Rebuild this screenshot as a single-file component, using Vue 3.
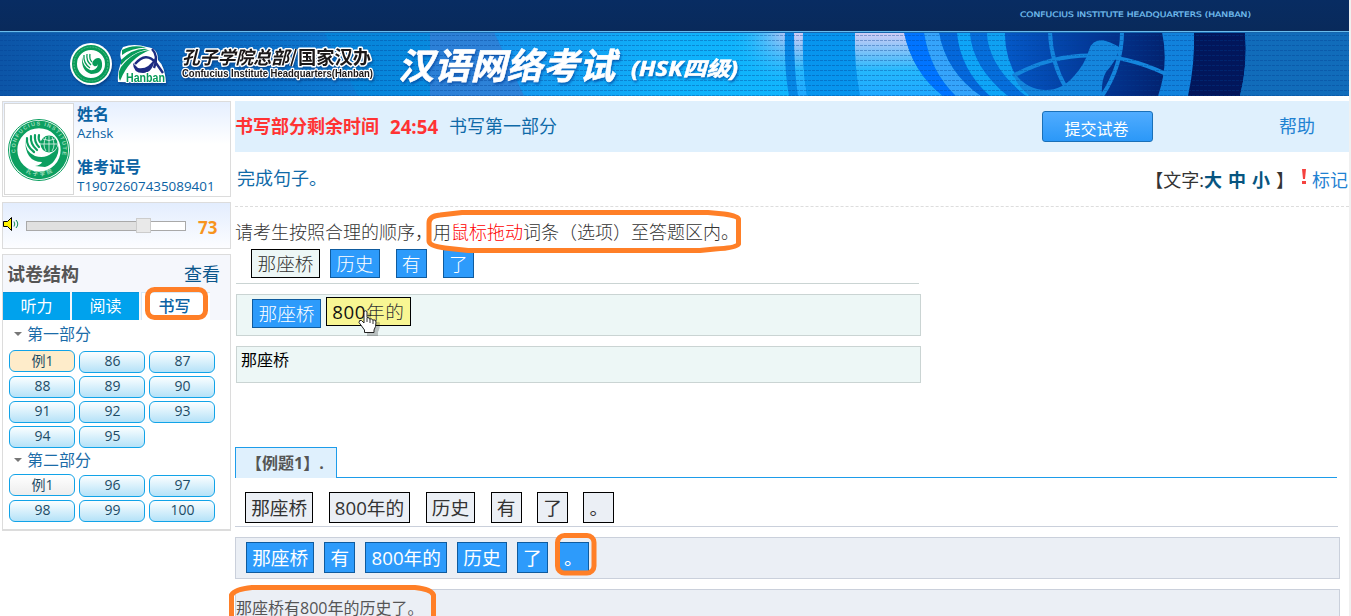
<template>

    <div class="page">

        <header class="banner">
            <svg class="art" width="1349" height="96" viewBox="0 0 1349 96">
                <defs>
                    <linearGradient id="top" x2="0" y2="1">
                        <stop offset="0" stop-color="#082c62" />
                        <stop offset="1" stop-color="#092a5b" />
                    </linearGradient>
                    <linearGradient id="sky" gradientUnits="userSpaceOnUse" x1="0" y1="0" x2="900" y2="0">
                        <stop offset="0" stop-color="#0c55a7" />
                        <stop offset=".3" stop-color="#0b70c8" />
                        <stop offset=".55" stop-color="#1594ec" />
                        <stop offset=".75" stop-color="#0fb2fb" />
                        <stop offset="1" stop-color="#12b8ff" />
                    </linearGradient>
                    <linearGradient id="shine" x2="0" y2="1">
                        <stop offset="0" stop-color="#d5cdf5" />
                        <stop offset=".6" stop-color="#25b8fd" />
                        <stop offset="1" stop-color="#1fa8ff" />
                    </linearGradient>
                    <radialGradient id="glow" gradientUnits="userSpaceOnUse" cx="790" cy="28" r="62">
                        <stop offset="0" stop-color="#d9c8f4" />
                        <stop offset="1" stop-color="#13bbff" stop-opacity="0" />
                    </radialGradient>
                    <linearGradient id="globe">
                        <stop offset="0" stop-color="#0459c8" />
                        <stop offset=".5" stop-color="#033b9c" />
                        <stop offset="1" stop-color="#03226f" />
                    </linearGradient>
                    <pattern id="dash" width="4" height="5" patternUnits="userSpaceOnUse">
                        <rect width="3" height="1" fill="#003c91" fill-opacity=".36" />
                    </pattern>
                </defs>
                <rect width="1349" height="31" fill="url(#top)" />
                <rect y="31" width="1349" height="1" fill="#6bbcec" />
                <rect y="32" width="1349" height="64" fill="url(#sky)" />
                <path d="M324 32H494L524 96H358Z" fill="#008bdc" opacity=".55" />
                <path d="M430 32H494L524 96H430Z" fill="#4a78cf" opacity=".55" />
                <rect x="720" y="32" width="70" height="64" fill="url(#glow)" />
                <path d="M785 32Q784 70 789 96H1349V32Z" fill="#0687e5" />
                <path d="M794 32Q794 70 798 96H807Q802 65 803 32Z" fill="url(#shine)" />
                <path d="M803 32Q802 65 807 96H860Q854 65 855 32Z" fill="#0795ee" />
                <path d="M855 32Q854 65 860 96H943Q912 72 904 32Z" fill="url(#shine)" />
                <path d="M904 32Q912 72 943 96H956Q930 71 924 32Z" fill="#0074ff" />
                <path d="M924 32Q930 71 956 96H981Q946 72 939 32Z" fill="#35a4fb" />
                <path d="M939 32Q946 72 981 96H990Q960 69 957 32Z" fill="#0468db" />
                <path d="M957 32Q960 69 990 96H1008Q972 67 970 32Z" fill="#0ea5f7" />
                <path d="M970 32Q972 67 1008 96H1026Q988 66 987 32Z" fill="#056edb" />
                <path d="M987 32Q988 66 1026 96H1189Q1195 64 1194 32Z" fill="#1182dc" />
                <path d="M987 32Q988 66 1026 96H1040Q1005 70 1005 32Z" fill="#0fa1f2" />
                <path d="M1005 32Q1004 66 1030 96H1158Q1169 64 1162 32Z" fill="url(#globe)" />
                <path d="M1194 32Q1195 64 1188 96H1240Q1248 64 1245 32Z" fill="#02165b" />
                <path d="M1245 32Q1248 64 1240 96H1349V32Z" fill="#116cba" />
                <g fill="none" stroke="#1486dd" stroke-width="4">
                    <path d="M1050 32Q1051 62 1066 88" />
                    <path d="M1122 32Q1122 66 1102 96" />
                    <path d="M1013 76Q1086 36 1166 74" />
                </g>
                <path d="M1014 72Q1026 90 1046 90Q1062 90 1074 76Q1085 64 1089 50Q1092 40 1102 40Q1109 41 1121 48L1118 53Q1115 62 1106 72Q1101 81 1102 96H1030Q1014 84 1014 72Z" fill="#1486dd" />
                <rect x="0" y="34" width="1349" height="62" fill="url(#dash)" />
                <rect y="32" width="1349" height="1" fill="#1565ad" />
                <text x="1020" y="17" class="tiny" textLength="231" lengthAdjust="spacingAndGlyphs">CONFUCIUS INSTITUTE HEADQUARTERS (HANBAN)</text>

                <!-- round seal -->
                <g class="drop">
                    <circle cx="91" cy="64" r="21" fill="#fff" />
                    <circle cx="91" cy="64" r="16.500" fill="none" stroke="#089b59" stroke-width="5" />
                    <circle cx="91" cy="64" r="17" fill="none" stroke="#4fb884" stroke-width="1" stroke-dasharray="2 1" />
                    <path d="M82 57Q81 71 91 74Q103 74 102 63Q101 56 95 59Q90 63 94 66Q97 67 98 64Q97 71 90 70Q83 67 82 57Z" fill="#089b59" />
                    <path d="M84 55Q83 63 90 68M87 54Q86 61 91 65M90 54Q89 59 92 62" fill="none" stroke="#089b59" stroke-width="1.300" />
                </g>
                <!-- Hanban mark -->
                <g class="drop">
                    <path d="M118 82Q117 71 122 61Q118 54 123 47Q134 43 147 47Q158 48 158 60Q165 66 166 83Z" fill="#fff" />
                    <path d="M122 50Q132 44 146 47.500Q131 48 122 55ZM121 60Q134 47 148 49Q131 53 121 65ZM121 67Q133 51 150 50Q129 58 120 81Q117 74 121 67Z" fill="#089b59" />
                    <path d="M135 64Q146 51 156 63L163 73M152 49Q159 56 154 68" fill="none" stroke="#1d2b82" stroke-width="2.400" />
                    <path d="M133 63Q133 73 143 73Q153 73 155 58Q148 70 138 68Z" fill="#1d2b82" />
                    <text x="126" y="82" class="hanban" textLength="39" lengthAdjust="spacingAndGlyphs">Hanban</text>
                </g>
                <g class="outlined drop">
                    <text x="182" y="64" class="brush" textLength="107" lengthAdjust="spacingAndGlyphs">孔子学院总部</text>
                    <path d="M291 66L296 49" fill="none" stroke="#fff" stroke-width="4" />
                    <path d="M291 66L296 49" fill="none" stroke="#1b1718" stroke-width="1.600" />
                    <text x="298" y="64" class="office" textLength="73" lengthAdjust="spacingAndGlyphs">国家汉办</text>
                    <text x="182" y="77" class="english" textLength="191" lengthAdjust="spacingAndGlyphs">Confucius Institute Headquarters(Hanban)</text>
                </g>
                <g class="title">
                    <text x="398" y="79" font-size="36" textLength="217">汉语网络考试</text>
                    <text x="631" y="76" font-size="20.500" textLength="107" lengthAdjust="spacingAndGlyphs">(HSK四级)</text>
                </g>
            </svg>
        </header>

        <div class="body">

            <aside>
                <section class="box profile">
                    <div class="avatar">
                        <svg width="62" height="62" viewBox="0 0 62 62">
                            <defs>
                                <path id="arcTop" d="M7.500 34A23.800 23.800 0 1 1 54.500 34" />
                                <path id="arcBottom" d="M12 49A27 27 0 0 0 50 49" />
                            </defs>
                            <circle cx="31" cy="31" r="30.500" fill="#fff" stroke="#0c9f60" />
                            <circle cx="31" cy="31" r="25.400" fill="none" stroke="#0c9f60" stroke-width="7.500" />
                            <text class="ring"><textPath href="#arcTop" textLength="84">CONFUCIUS INSTITUTE</textPath></text>
                            <text class="ring"><textPath href="#arcBottom" startOffset="7" textLength="28">孔子学院</textPath></text>
                            <circle cx="41" cy="25" r="8.500" fill="#0c9f60" />
                            <path d="M41 17V33M33 25H49M35 20Q41 23 47 20M38 18Q34 26 38 32M44 18Q48 26 44 32" fill="none" stroke="#fff" stroke-width=".7" />
                            <path d="M17 20Q17 33 27 37Q37 40 44 34Q49 31 50 26Q52 34 46 42Q43 46 37 48L27 47Q33 46 34 43Q17 43 17 20Z" fill="#0c9f60" />
                            <path d="M19 19Q18 27 26 33M23 17Q22 25 29 31M27 16Q26 23 31 28M31 16Q30 20 32 23" fill="none" stroke="#0c9f60" stroke-width="2.200" stroke-linecap="round" />
                        </svg>
                    </div>
                    <dl>
                        <dt>姓名</dt>
                        <dd>Azhsk</dd>
                        <dt class="second">准考证号</dt>
                        <dd class="id">T19072607435089401</dd>
                    </dl>
                </section>

                <section class="box volume">
                    <svg class="speaker" width="17" height="14" viewBox="0 0 17 14">
                        <path d="M.5 4.500H4.500L8.500.5V13.500L4.500 9.500H.5Z" fill="#fff200" stroke="#000" />
                        <path d="M11 4.500Q12.500 7 11 9.500M13 3Q16.500 7 13 11" fill="none" stroke="#148a55" />
                    </svg>
                    <div class="track">
                        <div class="filled" :style="{ width: volume + '%' }"></div>
                        <div class="thumb"></div>
                    </div>
                    <b>{{ volume }}</b>
                </section>

                <section class="box structure">
                    <div class="heading"><h2>试卷结构</h2><a>查看</a></div>
                    <nav>
                        <a v-for="t in tabs" :key="t" :class="{'current': t === current}">{{ t }}</a>
                    </nav>
                    <div v-for="part in parts" :key="part.name" class="part">
                        <h3><i></i>{{ part.name }}</h3>
                        <div class="numbers">
                            <button v-for="(n, i) in part.items" :key="n" :class="{'example': i === 0, 'active': i === 0 && part.active}">{{ n }}</button>
                        </div>
                    </div>
                </section>
            </aside>

            <main>
                <div class="status">
                    <b class="left">书写部分剩余时间</b>
                    <b class="clock">24:54</b>
                    <span>书写第一部分</span>
                    <button>提交试卷</button>
                    <a>帮助</a>
                </div>

                <div class="prompt">
                    <span>完成句子。</span>
                    <div class="sizes">【文字:<b>大</b><b>中</b><b>小</b>】</div>
                    <svg width="4" height="16" viewBox="0 0 4 16"><path d="M0 0H4L3 10H1ZM0 12H4V15H0Z" fill="#f5423f" /></svg>
                    <a>标记</a>
                </div>

                <p class="instruction">请考生按照合理的顺序，用<em>鼠标拖动</em>词条（选项）至答题区内。</p>

                <div class="source tokens">
                    <span class="plain">那座桥</span>
                    <span class="blue">历史</span>
                    <span class="blue">有</span>
                    <span class="blue">了</span>
                </div>

                <div class="answer tokens">
                    <span class="blue">那座桥</span>
                    <span class="dragged"><b>800</b>年的</span>
                </div>
                <div class="written">那座桥</div>

                <div class="exampleTab"><h4>【例题1】.</h4></div>
                <div class="sample tokens">
                    <span v-for="w in sample" :key="w" class="plain">{{ w }}</span>
                </div>
                <div class="solution tokens">
                    <span v-for="w in solution" :key="w" class="blue">{{ w }}</span>
                </div>
                <div class="sentence">那座桥有800年的历史了。</div>
            </main>

        </div>

        <!-- hand-drawn marks and the pointer lie over the page -->
        <svg class="marks" width="1351" height="616" viewBox="0 0 1351 616">
            <g fill="none" stroke="#ff7f27" stroke-width="5" stroke-linejoin="round">
                <path d="M429 223Q429 216 440 215L462 212.500H708L724 214Q738 216 738.500 219V244Q736 248 715 249L700 250.500H468L445 248Q429 246 429 241Z" />
                <rect x="147.500" y="289.500" width="58" height="28" rx="7" />
                <rect x="557.500" y="535.500" width="36.500" height="37.500" rx="7" />
                <path d="M231.500 622V595Q235 589 252 587.500H415Q431 589 433.500 595V622" />
            </g>
            <g transform="translate(358 310)">
                <path d="M8 3V14L5 11Q2 10 2 13L7 22V25H18V21Q20 18 20 12Q19 10 17 11Q16 9 14 10Q13 8 11 9V3Q9 1 8 3Z" transform="translate(2 1)" fill="#000" opacity=".22" />
                <path d="M6 1.500Q7.500 0 9 1.500V7.500Q11 7 11.500 9Q14 8 14.500 10Q18 9 18 12Q18 17 16 20V22.500H6.500V20L1 12.500Q1 9.500 3.500 10.500L6 13Z" fill="#fff" stroke="#222" />
                <path d="M9 8V12M12 9V13M15 10V14" stroke="#333" fill="none" />
            </g>
        </svg>

    </div>

</template>

<script setup>
import { ref } from 'vue'


    const volume = ref(73)
    const current = ref('书写')
    const tabs = ['听力', '阅读', '书写']

    const parts = [
        { name: '第一部分', active: true, items: ['例1', 86, 87, 88, 89, 90, 91, 92, 93, 94, 95] },
        { name: '第二部分', active: false, items: ['例1', 96, 97, 98, 99, 100] }
    ]

    const sample = ['那座桥', '800年的', '历史', '有', '了', '。']
    const solution = ['那座桥', '有', '800年的', '历史', '了', '。']
</script>

<style>
    body {
        overflow: hidden;
    }
</style>

<style scoped>

    * {
        box-sizing: border-box;
        margin: 0;
    }

    .page {
        position: relative;
        width: 1351px;
        height: 616px;
        overflow: hidden;
        border-right: 2px solid #f0f0f0;
        background: #fff;
        color: #333;
        font-family: "Open Sans", "Noto Sans CJK SC", sans-serif;
        text-spacing-trim: space-all;
        white-space: nowrap;
    }

    .art {
        display: block;
    }

    .tiny {
        font: 7.5px "DejaVu Sans", sans-serif;
        fill: #79c4f4;
        stroke: #79c4f4;
        stroke-width: .2px;
    }

    .drop {
        filter: drop-shadow(1px 2px 1px rgba(0,30,90,0.4));
    }

    .hanban {
        font: bold 12px "Liberation Sans", sans-serif;
        fill: #089b59;
        stroke: #fff;
        stroke-width: 2px;
        paint-order: stroke;
    }

    .outlined text {
        fill: #1b1718;
        stroke: #fff;
        stroke-width: 3px;
        stroke-linejoin: round;
        paint-order: stroke;
    }

    .brush {
        font: italic bold 18px "Noto Sans CJK SC", sans-serif;
    }

    .office {
        font: bold 18px "Noto Sans CJK SC", sans-serif;
    }

    .outlined .english {
        font: bold 10px "Liberation Sans", sans-serif;
        stroke-width: 2.5px;
    }

    .title text {
        fill: #fff;
        stroke: #fff;
        stroke-width: .6px;
        font-family: "Open Sans", "Noto Sans CJK SC", sans-serif;
        font-weight: bold;
        font-style: italic;
        filter: drop-shadow(1px 2px 1px rgba(0,60,150,0.6));
    }

    .body {
        display: flex;
        gap: 4px;
        padding: 5px 0 0 2px;
    }

    aside {
        width: 229px;
        display: flex;
        flex-direction: column;
        gap: 5px;
    }

    .box {
        border: 1px solid #dcdcdc;
    }

    .profile {
        display: flex;
        height: 96px;
        padding: 1px;
        background: linear-gradient(#e5efff, #fff 45%);
    }

    .avatar {
        width: 70px;
        height: 92px;
        padding: 15px 3px;
        border: 1px solid #d8d8d8;
        background: #fff;
    }

    .avatar svg {
        overflow: visible;
    }

    .ring {
        font: bold 5.5px "Liberation Sans", "Noto Sans CJK SC", sans-serif;
        fill: #9adbb9;
    }

    dl {
        padding-left: 3px;
        color: #0a62a3;
    }

    dt {
        height: 21px;
        font-size: 16px;
        line-height: 23px;
        font-weight: bold;
    }

    dd {
        height: 17px;
        font-size: 13.4px;
        line-height: 19px;
    }

    .second {
        margin-top: 15px;
    }

    .volume {
        display: flex;
        align-items: center;
        height: 47px;
        background: linear-gradient(#e3edfe, #fcfdff);
    }

    .speaker {
        margin-bottom: 3px;
    }

    .track {
        display: flex;
        align-items: center;
        width: 160px;
        height: 10px;
        margin-left: 6px;
        border: 1px solid #a9a9a9;
        background: #fff;
    }

    .filled {
        height: 8px;
        background: #e0e0e0;
    }

    .thumb {
        width: 15px;
        height: 15px;
        margin-left: -6px;
        border: 1px solid #ccc;
        background: #e9e9e9;
        flex-shrink: 0;
    }

    .volume b {
        margin: 3px 0 0 12px;
        color: #f7941d;
        font-size: 17px;
    }

    .structure {
        height: 277px;
        background: #fff;
        border-bottom: 2px solid #dcdcdc;
    }

    .heading {
        display: flex;
        justify-content: space-between;
        height: 37px;
        padding: 0 10px 0 5px;
        background: #f5f7fc;
        line-height: 38px;
    }

    .heading h2 {
        margin-left: -1px;
        color: #555;
        font-size: 18px;
    }

    .heading a {
        color: #0b568b;
        font-size: 18px;
    }

    nav {
        display: flex;
        gap: 2px;
        height: 28px;
        background: #f5f7fc;
    }

    nav a {
        width: 67px;
        border-top: 1px solid #0794dc;
        background: #00a2ed;
        color: #fff;
        font-size: 16px;
        line-height: 27px;
        text-align: center;
    }

    nav .current {
        width: 69px;
        padding-right: 3px;
        border: 1px solid #d6e8f7;
        border-width: 1px 0 0 1px;
        background: #fff;
        color: #0b62a3;
        font-weight: 500;
    }

    .part h3 {
        display: flex;
        align-items: center;
        height: 31px;
        padding: 0 0 3px 10px;
        color: #1b6ca8;
        font-size: 16px;
        line-height: 22px;
        font-weight: 400;
    }

    .part + .part h3 {
        height: 24px;
        padding-bottom: 6px;
    }

    .part h3 i {
        margin: 0 5px 0 1px;
        border: 4px solid transparent;
        border-top-color: #777;
        border-bottom: 0;
    }

    .numbers {
        display: grid;
        grid-template-columns: repeat(3, 66px);
        gap: 3px 4px;
        padding: 0 0 3px 6px;
    }

    .numbers button {
        height: 22px;
        padding: 0 0 2px 1px;
        border: 1px solid #11a3e8;
        border-radius: 6px;
        background: linear-gradient(#fbfeff, #b5e2f8);
        color: #1d4c66;
        font: 14px/18px "Open Sans", "Noto Sans CJK SC", sans-serif;
    }

    .numbers .example {
        margin-top: -1px;
        padding-bottom: 1px;
        background: linear-gradient(#fff, #ededed);
    }

    .numbers .active {
        background: #feecca;
    }

    main {
        width: 1114px;
    }

    .status {
        display: flex;
        height: 51px;
        background: #dff0fd;
        font-size: 18px;
        line-height: 51px;
    }

    .status b {
        color: #ff3333;
    }

    .status .clock {
        width: 50px;
        margin: 0 9px 0 11px;
        font-size: 18.7px;
    }

    .status span {
        color: #0f6aa8;
    }

    .status button {
        width: 111px;
        height: 31px;
        margin: 10px 0 0 auto;
        padding: 2px 2px 0 0;
        border: 1px solid #1a70b8;
        border-radius: 3px;
        background: linear-gradient(#50acff, #2b98f8);
        color: #fff;
        font: 16px/26px "Noto Sans CJK SC", sans-serif;
    }

    .status a {
        margin: 0 34px 0 126px;
        color: #1f82d2;
    }

    .prompt {
        display: flex;
        align-items: center;
        height: 55px;
        padding: 0 0 4px 2px;
        border-bottom: 1px dashed #ddd;
        color: #0f6aa8;
        font-size: 18px;
    }

    .sizes {
        display: flex;
        gap: 6px;
        margin: 3px 0 0 auto;
        color: #333;
    }

    .sizes b {
        color: #075580;
    }

    .sizes b:first-of-type {
        margin-left: -6px;
    }

    .prompt svg {
        margin: 2px 6px 2px 8px;
    }

    .prompt a {
        margin: 3px 1px 0 0;
        color: #1f82d2;
    }

    .instruction {
        height: 42px;
        font-size: 18px;
        line-height: 51px;
        font-weight: 300;
    }

    .instruction em {
        color: #f00;
        font-style: normal;
    }

    .tokens {
        display: flex;
    }

    .tokens span {
        height: 31px;
        padding: 0 5.2px;
        border: 1px solid #000;
        font-size: 18.67px;
        line-height: 30px;
    }

    .tokens .plain {
        background: #ebeff5;
    }

    .tokens .blue {
        border-color: #0f5b9e;
        background: #2d9bfb;
        color: #fff;
    }

    .source {
        width: 683px;
        height: 35px;
        margin-left: 1px;
        padding-left: 15px;
        gap: 16px;
        border-bottom: 1px solid #cad4d3;
    }

    .source span, .answer span {
        height: 29px;
        padding: 0 5.2px;
        line-height: 28px;
        font-weight: 300;
    }

    .source .plain, .answer .blue {
        padding: 0 5.5px;
    }

    .source .plain {
        margin-right: -6px;
        background: #edf7f6;
    }

    .answer {
        width: 685px;
        height: 42px;
        margin: 10px 0 0 1px;
        padding: 4px 15px;
        gap: 5px;
        border: 1px solid #cad4d3;
        background: #edf7f6;
    }

    .answer .dragged {
        margin-top: -2px;
        background: #f8f693;
        color: #333;
        letter-spacing: .6px;
    }

    .dragged b {
        color: #111;
        font-weight: 400;
    }

    .written {
        width: 685px;
        height: 37px;
        margin: 10px 0 0 1px;
        padding-left: 4px;
        border: 1px solid #cad4d3;
        background: #edf7f6;
        color: #000;
        font-size: 16px;
        line-height: 27px;
    }

    .exampleTab {
        display: flex;
        width: 1102px;
        height: 31px;
        margin-top: 64px;
        border-bottom: 1px solid #1d9cea;
    }

    h4 {
        width: 102px;
        height: 31px;
        padding-left: 10px;
        border: 1px solid #1d9cea;
        border-bottom: 0;
        background: #dff0fd;
        color: #555;
        font-size: 16px;
        line-height: 31px;
    }

    .sample {
        width: 1103px;
        height: 49px;
        padding: 14px 10px 0;
        gap: 15.3px;
        border-bottom: 1px solid #cad0db;
    }

    .solution {
        width: 1105px;
        height: 42px;
        margin-top: 10px;
        padding: 4px 10px;
        gap: 10px;
        border: 1px solid #cad0db;
        background: #ebeff5;
    }

    .sentence {
        width: 1105px;
        height: 42px;
        margin-top: 10px;
        border: 1px solid #cad0db;
        background: #ebeff5;
        color: #555;
        font-size: 16px;
        line-height: 36px;
    }

    .marks {
        position: absolute;
        top: 0;
        left: 0;
    }
</style>
